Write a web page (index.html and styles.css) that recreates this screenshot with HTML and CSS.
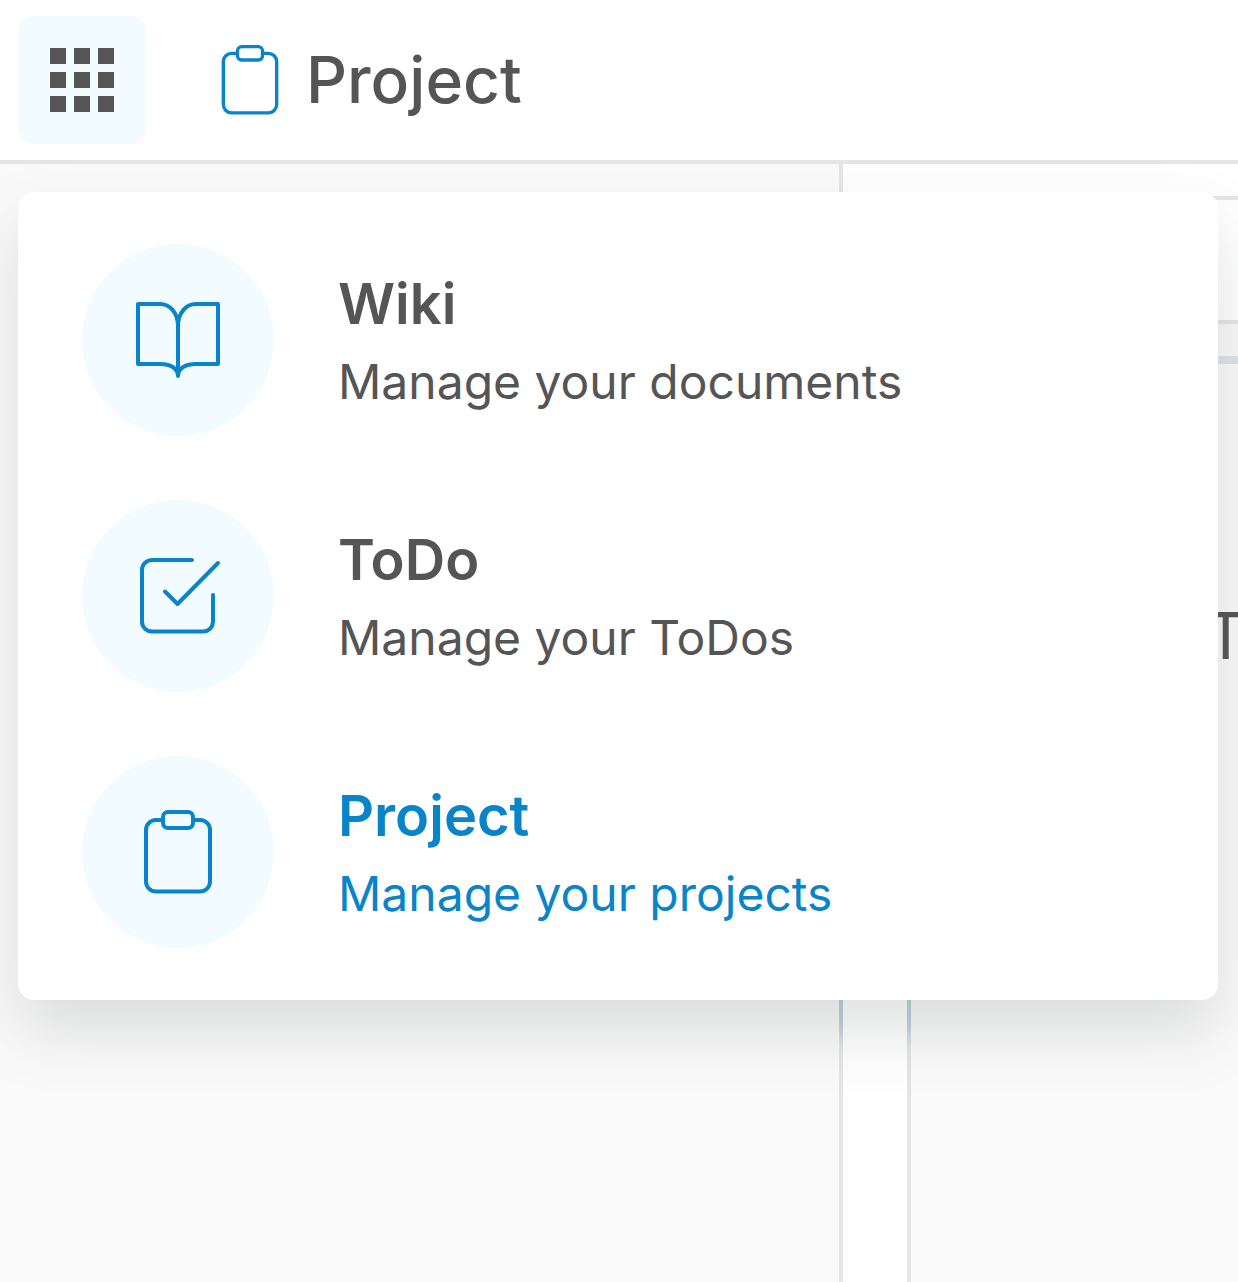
FILE: index.html
```html
<!DOCTYPE html>
<html lang="en">
<head>
<meta charset="utf-8">
<title>Project</title>
<link rel="stylesheet" href="styles.css">
</head>
<body>
<div class="page">
  <header class="topbar">
    <button class="launcher" type="button" aria-label="Apps">
      <span class="dots"><i></i><i></i><i></i><i></i><i></i><i></i><i></i><i></i><i></i></span>
    </button>
    <div class="current">
      <svg class="icon icon-top" viewBox="0 0 96 96"><path d="M33 16H26a10 10 0 0 0-10 10V77.500a10 10 0 0 0 10 10H70a10 10 0 0 0 10-10V26a10 10 0 0 0-10-10H63"/><rect x="33" y="8" width="30" height="16" rx="5"/></svg>
      <span class="current-name">Project</span>
    </div>
  </header>
  <div class="workspace">
    <aside class="sidebar"></aside>
    <div class="panel">
      <div class="rail"></div>
      <main class="content">
        <div class="content-head"></div>
        <div class="content-sub"></div>
        <div class="content-text">Todo</div>
      </main>
    </div>
  </div>
  <nav class="menu">
    <a class="menu-item">
      <span class="bubble">
        <svg class="icon" viewBox="0 0 96 96"><path d="M48 34C48 21 40 12 30 12H8V72H30C40 72 48 76 48 84C48 76 56 72 66 72H88V12H66C56 12 48 21 48 34V82"/></svg>
      </span>
      <span class="labels"><span class="item-title">Wiki</span><span class="item-desc">Manage your documents</span></span>
    </a>
    <a class="menu-item">
      <span class="bubble">
        <svg class="icon" viewBox="0 0 96 96"><path d="M62 12H22a10 10 0 0 0-10 10V73.500a10 10 0 0 0 10 10H73a10 10 0 0 0 10-10V47"/><path d="M35 43.500L47.500 56L88 15"/></svg>
      </span>
      <span class="labels"><span class="item-title">ToDo</span><span class="item-desc">Manage your ToDos</span></span>
    </a>
    <a class="menu-item is-active">
      <span class="bubble">
        <svg class="icon" viewBox="0 0 96 96"><path d="M33 16H26a10 10 0 0 0-10 10V77.500a10 10 0 0 0 10 10H70a10 10 0 0 0 10-10V26a10 10 0 0 0-10-10H63"/><rect x="33" y="8" width="30" height="16" rx="5"/></svg>
      </span>
      <span class="labels"><span class="item-title">Project</span><span class="item-desc">Manage your projects</span></span>
    </a>
  </nav>
</div>
</body>
</html>
```
FILE: styles.css
```css
* { box-sizing: border-box; }
html, body { margin: 0; padding: 0; height: 100%; overflow: hidden; }
body { font-family: Inter, "Liberation Sans", sans-serif; color: #555; background: #fff; }

.page { position: relative; width: 1238px; height: 1282px; overflow: hidden; display: flex; flex-direction: column; }

.topbar { flex: none; height: 164px; display: flex; align-items: center; gap: 64px; padding: 0 18px; background: #fff; border-bottom: 4px solid #e5e5e5; }
.launcher { width: 128px; height: 128px; padding: 0; border: 0; border-radius: 16px; background: #f2fbff; display: flex; align-items: center; justify-content: center; }
.dots { display: grid; grid-template-columns: repeat(3, 16px); grid-auto-rows: 16px; gap: 8px; }
.dots i { display: block; background: #555; }

.current { display: flex; align-items: center; gap: 14px; }
.current-name { font-size: 64px; line-height: 80px; font-weight: 500; color: #555; padding-left: 2px; }

.icon { display: block; width: 96px; height: 96px; fill: none; stroke: #0a84c8; stroke-width: 4; stroke-linecap: round; stroke-linejoin: round; }
.icon-top { width: 80px; height: 80px; }

.workspace { flex: 1; display: flex; min-height: 0; }
.sidebar { flex: none; width: 843px; background: #fafafa; border-right: 4px solid #e5e5e5; border-image: linear-gradient(to bottom, #e5e5e5 0, #e5e5e5 836px, #bbd2dd 836px, #bbd2dd 860px, #e5e5e5 882px) 1; }
.panel { flex: 1; min-width: 0; display: flex; padding-top: 32px; background: #fff; }
.rail { flex: none; width: 68px; background: #fff; border-right: 4px solid #e5e5e5; border-image: linear-gradient(to bottom, #e5e5e5 0, #e5e5e5 804px, #bbd2dd 804px, #bbd2dd 828px, #e5e5e5 850px) 1; }
.content { flex: 1; background: #fafafa; min-width: 0; }
.content-head { height: 128px; background: #fff; border-top: 4px solid #e5e5e5; border-bottom: 4px solid #e5e5e5; }
.content-sub { height: 40px; border-bottom: 8px solid #dde3e6; background: #f9f9f9; }
.content-text { padding: 232px 0 0 294px; font-size: 64px; line-height: 80px; font-weight: 400; white-space: nowrap; color: #555; }

.menu { position: absolute; left: 18px; top: 192px; width: 1200px; height: 808px; padding: 52px 64px; display: flex; flex-direction: column; gap: 64px; background: #fff; border-radius: 16px; box-shadow: 0 32px 64px rgba(70, 80, 80, 0.17); }
.menu-item { display: flex; align-items: center; gap: 64px; height: 192px; color: #555; }
.bubble { flex: none; width: 192px; height: 192px; border-radius: 50%; background: #f2fbff; display: flex; align-items: center; justify-content: center; }
.labels { display: flex; flex-direction: column; gap: 11px; padding-top: 3px; }
.item-title { font-size: 56px; line-height: 70px; font-weight: 600; }
.item-desc { font-size: 48px; line-height: 64px; font-weight: 400; }
.is-active { color: #0a84c8; }
```
